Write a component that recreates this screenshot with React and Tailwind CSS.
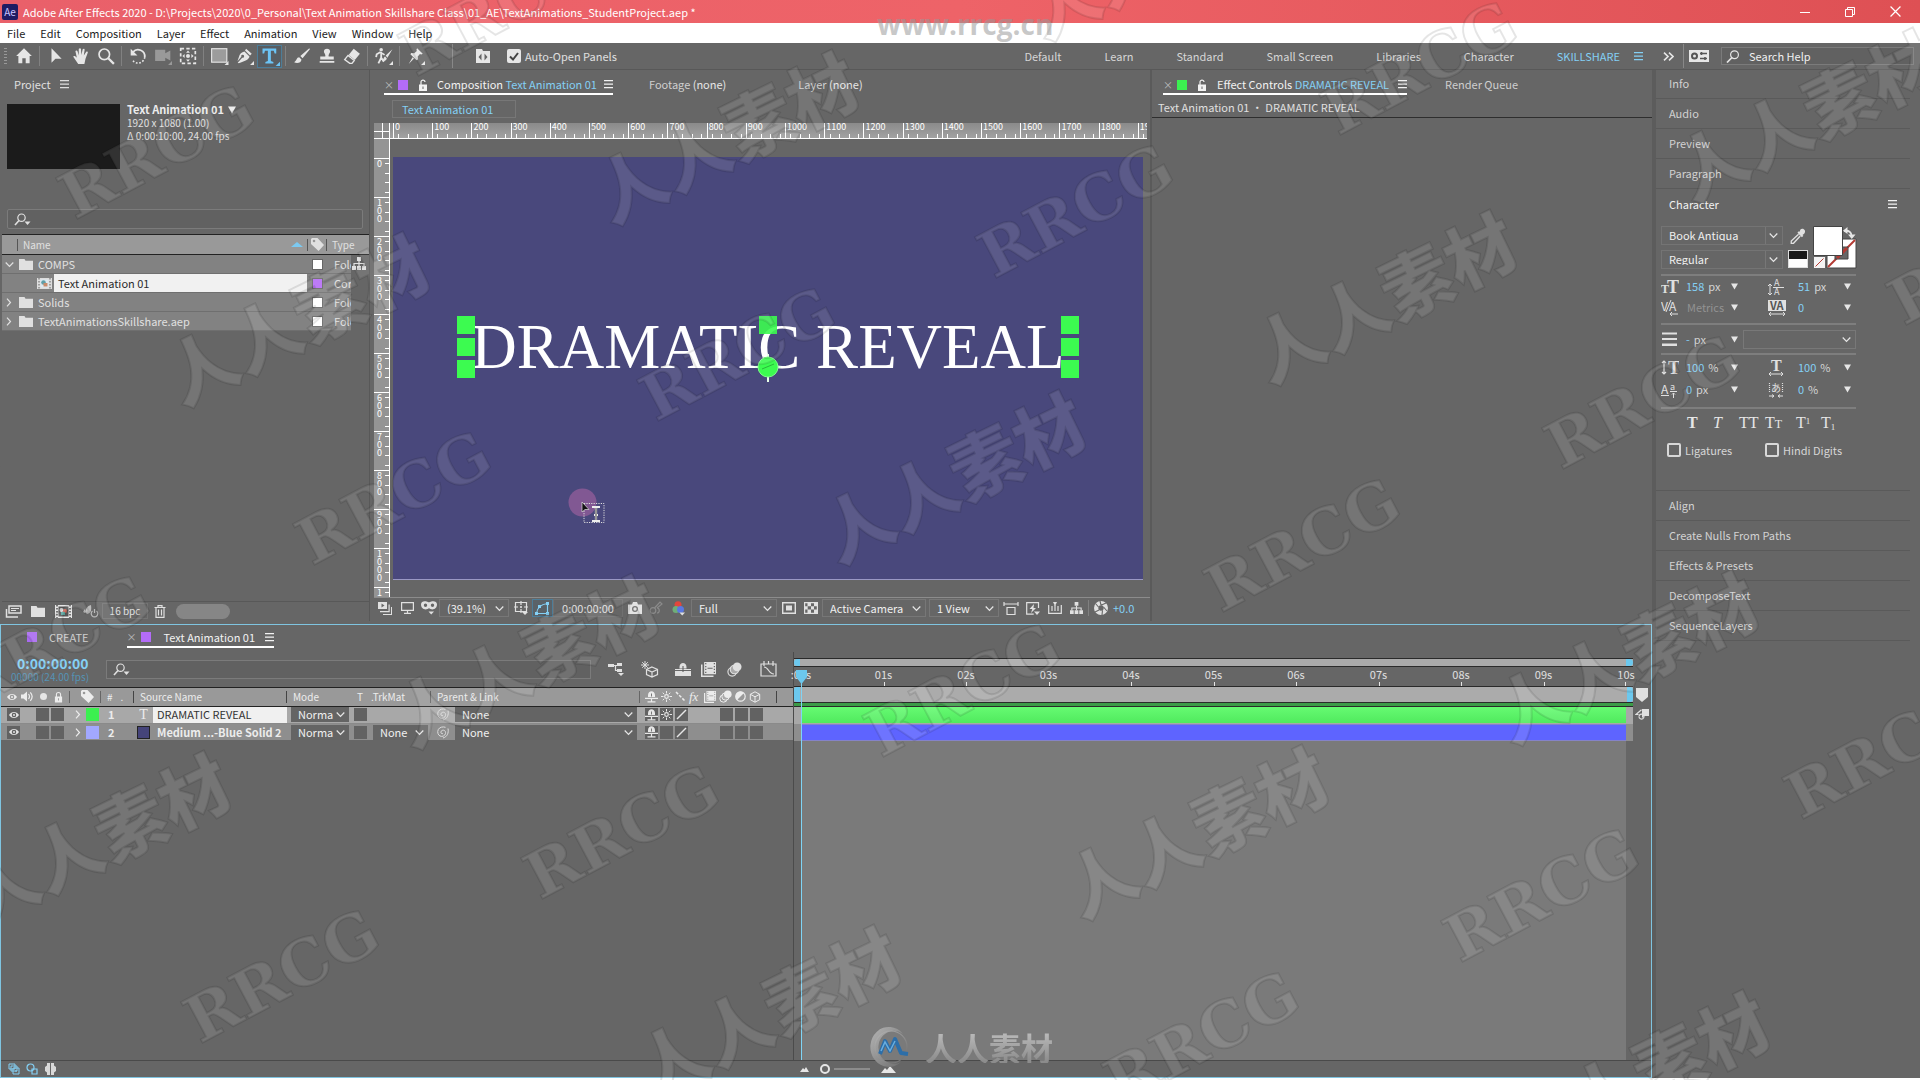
import React from "react";

const FONT = "font-['Noto_Sans_CJK_SC','Noto_Sans',sans-serif]";

function Ic({ w = 16, h = 16, vb = "0 0 16 16", className = "", children }) {
  return (
    <svg width={w} height={h} viewBox={vb} className={`shrink-0 ${className}`} fill="currentColor" aria-hidden="true">
      {children}
    </svg>
  );
}
const line = { fill: "none", stroke: "currentColor", strokeWidth: 1.2 };

const Corner = () => <path d="M16 12.5V16h-3.500z" />;
const Home = () => <Ic w={18} h={18}><path d="M8 1 1 8h2v6.500h3.500V10h3v4.500H13V8h2z" /></Ic>;
const Arrow = () => <Ic w={18} h={18}><path d="M4 1v13l3.500-3.500H13z" /></Ic>;
const Hand = () => (
  <Ic w={18} h={18}>
    <path d="M5.500 15C4 13 2.500 10.500 1 8.500c.8-1 2-.6 3.300 1L3 3.500c.9-.9 1.700-.4 2 .6L6 7.500 6 1.800c.6-1.100 1.700-1 2 0L8.300 7l1.200-5c.8-.9 1.800-.5 1.700.6L10.500 7.500l2.200-3.300c.9-.5 1.600.1 1.300 1L12 10.500 11 15z" />
  </Ic>
);
const Lens = ({ s = 18 }) => <Ic w={s} h={s}><g {...line} strokeWidth="1.500"><circle cx="6.500" cy="6.500" r="4.700" /><path d="m10 10 5 5" strokeWidth="2" /></g></Ic>;
const Rotate = () => (
  <Ic w={18} h={18}>
    <path d="M3.500 4.500A6 6 0 0 1 14 9" {...line} strokeWidth="1.600" />
    <path d="M14 9A6 6 0 0 1 3 11.500" {...line} strokeWidth="1.400" strokeDasharray="1.500 1.500" />
    <path d="M1.500 1.500v6h6z" />
  </Ic>
);
const CamTool = () => <Ic w={20} h={18} className="text-[#999]"><path d="M1 2.500h9v3l4.500-2.500v9L10 9.500v3H1z" /><Corner /></Ic>;
const PanBehind = () => (
  <Ic w={18} h={18}>
    <rect x="1.500" y="1.500" width="13" height="13" {...line} strokeDasharray="3 2" strokeWidth="1.500" />
    <path d="M8 3 6.300 5h3.400zM8 13l1.700-2H6.300zM3 8l2-1.700v3.400zM13 8l-2 1.700V6.300z" /><circle cx="8" cy="8" r="1.800" />
  </Ic>
);
const RectTool = () => <Ic w={19} h={18}><rect x="1" y="1.500" width="13.500" height="12" fill="#9c9c9c" stroke="#e6e6e6" /><Corner /></Ic>;
const Pen = () => (
  <Ic w={18} h={18}>
    <path d="M9 1.500 14 6l-1.500 1.500L8 3zM7.500 4 12 8.500C11.500 11 9 12 6 13l-3.500 1.500L1.500 14l4-4.500a1.300 1.300 0 1 0-.8-.8l-3.400 4L2.500 9c.7-3 2.500-4.500 5-5z" /><Corner />
  </Ic>
);
const TypeTool = () => <Ic w={20} h={20} className="text-[#6cc4f5]"><path d="M2 2h11v4h-1.300L11 3.700H8.700V12l2 .7V14H4.300v-1.300l2-.7V3.700H4L3.300 6H2z" /><Corner /></Ic>;
const Brush = () => <Ic w={18} h={18}><path d="M14.500 1 6.500 8l2 2L15 2zM5.500 9C3 9 3.500 12 1 13.500c2.500 1.500 6.500.5 6.500-2.500z" /></Ic>;
const Stamp = () => <Ic w={18} h={18}><path d="M6.500 8.500C7 6 5 5.500 5.300 3.500c.4-2.700 5-2.700 5.400 0C11 5.500 9 6 9.500 8.500H14V11H2V8.500zM1.500 12.500h13V14h-13z" /></Ic>;
const Eraser = () => <Ic w={18} h={18}><path d="M9.500 1.500 15 6l-4.500 5.500L5 7z" /><path d="M4.500 7.500 1.500 11.200 6 14.500h2l2-2.500z" {...line} /></Ic>;
const Roto = () => (
  <Ic w={20} h={18}>
    <circle cx="5.500" cy="2.500" r="1.600" /><path d="m5 4.500-3.500 2L1 9M5.500 4.500v5L3 14.500M5.500 9.500 8 13M5.500 5l3 2" {...line} strokeWidth="1.600" />
    <path d="M15.500 2 9.500 7.500l1.500 2zM9 8.500c-1.500.5-1 2.500-3 4 2 .6 4-.500 4.500-2.300z" /><Corner />
  </Ic>
);
const PinTool = () => <Ic w={18} h={18}><path d="m9 1 5 5-1.300.6-1.200-.4L9.500 8.500l.2 2.500-1.200.8L3 6.500l.8-1.200 2.700.3L8.700 3.500 8.400 2.300zM5 9l1.200 1.200L1.500 15z" /><Corner /></Ic>;
const Snap = () => (
  <Ic w={16} h={16}><path d="M1 1h6l1 2h7v12H1z" /><path d="M6.500 5.500 3.500 9l3 3.500zM9.500 5.500l3 3.500-3 3.500z" fill="#666" /></Ic>
);
const MenuIc = ({ className = "" }) => <Ic w={9} h={9} vb="0 0 9 9" className={className}><path d="M0 0h9v1.200H0zM0 3.500h9v1.200H0zM0 7h9v1.200H0z" /></Ic>;
const Chev = ({ className = "" }) => <Ic w={9} h={9} vb="0 0 9 9" className={className}><path d="m.7 2.500 3.800 4 3.800-4" {...line} /></Ic>;
const ChevR = () => <Ic w={8} h={9} vb="0 0 8 9"><path d="m2 .7 3.500 3.800L2 8.300" {...line} /></Ic>;
const Lock = ({ w = 10, open = true }) => (
  <Ic w={w} h={12} vb="0 0 10 12"><path d={open ? "M3 6V3c0-2.500 4-2.500 4 0" : "M2.700 6V3.200c0-3 4.600-3 4.600 0V6"} {...line} /><path d="M1 5.500h8V12H1zM4.500 7.500v2.500h1V7.500z" fillRule="evenodd" /></Ic>
);
const SearchIc = () => <Ic w={17} h={13} vb="0 0 17 13"><circle cx="7.500" cy="4.700" r="3.700" {...line} /><path d="M5 7.500 1 12" {...line} strokeWidth="1.600" /><path d="M10.500 8.500h6L13.500 12z" /></Ic>;
const Folder = () => <Ic w={14} h={11} vb="0 0 14 11"><path d="M0 0h5.500l1 1.800H14V11H0z" /></Ic>;
const TagIc = ({ s = 13 }) => <Ic w={s} h={s} vb="0 0 12 12"><path d="M1 0h5l6 6.500L7 12 0 5.500V1zM2.800 1.500a1.200 1.200 0 1 0 0 2.400 1.200 1.200 0 0 0 0-2.400z" fillRule="evenodd" /></Ic>;
const Tree = ({ s = 14, className = "" }) => <Ic w={s} h={s} vb="0 0 14 14" className={className}><path d="M5 0h4v4H5zM0 9h4v4H0zM5 9h4v4H5zM10 9h4v4h-4z" /><path d="M7 4v5M2 9V6.500h10V9" {...line} /></Ic>;
const CompIc = () => <Ic w={15} h={11} vb="0 0 15 11"><path fill="#ddd" d="M0 0h15v11H0z" /><path d="M2 0v11M13 0v11" stroke="#777" strokeDasharray="1.500 1.500" strokeWidth="1.200" /><path fill="#dfeaf2" d="M3.500 1.500h8v8h-8z" /><circle cx="6.500" cy="4.500" r="2.300" fill="#5f9ea8" /><path d="M6.500 5h4v3.500h-4z" fill="#c98b6b" /></Ic>;
const Eye = () => <Ic w={10} h={8} vb="0 0 10 8"><path d="M0 4C2.500 0 7.500 0 10 4 7.500 8 2.500 8 0 4zm5-2.300a2.300 2.300 0 1 0 0 4.600 2.300 2.300 0 0 0 0-4.600z" fillRule="evenodd" /><circle cx="5" cy="4" r="1" /></Ic>;
const Speaker = () => <Ic w={12} h={11} vb="0 0 12 11"><path d="M0 3.500h2.500L6 .5v10L2.500 7.500H0z" /><path d="M7.500 3c1.200 1.500 1.200 3.500 0 5M9.300 1.300c2.200 2.500 2.200 6 0 8.500" {...line} /></Ic>;
const Shy = () => <Ic w={13} h={12} vb="0 0 13 12"><path d="M3 6V4.200c0-5.200 7-5.200 7 0V6zM0 6.800h13V8H0zM2.500 10.300h8v1.200h-8z" /><path d="M6.500 7.500V11" {...line} /><path d="M6.500 2.500v3" stroke="#777" /></Ic>;
const Sun = () => <Ic w={11} h={11} vb="0 0 11 11"><circle cx="5.500" cy="5.500" r="1.800" {...line} /><path d="M5.500 0v2.500M5.500 8.500V11M0 5.500h2.500M8.500 5.500H11M1.700 1.700l1.500 1.500M7.800 7.800l1.500 1.500M9.300 1.700 7.800 3.200M3.200 7.800 1.700 9.300" {...line} strokeWidth="1" /></Ic>;
const Slash = ({ back }) => <Ic w={11} h={11} vb="0 0 11 11"><path d={back ? "M1 1l9 9" : "M1 10 10 1"} {...line} strokeWidth="1.500" strokeDasharray={back ? "3 1.500" : undefined} /></Ic>;
const Film = ({ s = 12 }) => <Ic w={s} h={s} vb="0 0 12 12"><path d="M0 2v10h10v-1.200H1.200V2zM2.500 0H12v9.800H2.500zM3.300.8v1h1v-1zm0 2.300v1h1v-1zm0 2.300v1h1v-1zm0 2.300v1h1v-1zM10.200.8v1h1v-1zm0 2.300v1h1v-1zm0 2.300v1h1v-1zm0 2.300v1h1v-1zM5.200 4.500v.8H9.300v-.8z" fillRule="evenodd" /></Ic>;
const Blur = ({ s = 13 }) => <Ic w={s} h={s} vb="0 0 13 13"><circle cx="4.500" cy="8.500" r="3.700" {...line} strokeWidth="1" /><circle cx="6.500" cy="6.500" r="3.700" fill="#aaa" stroke="currentColor" /><circle cx="8.800" cy="4.200" r="3.800" /></Ic>;
const Half = () => <Ic w={11} h={11} vb="0 0 11 11"><circle cx="5.500" cy="5.500" r="4.700" {...line} /><path d="M9 2A4.700 4.700 0 0 0 2 9z" /></Ic>;
const Cube = ({ s = 12 }) => <Ic w={s} h={s} vb="0 0 12 12"><path d="m6 .8 4.700 2.500v5.400L6 11.200 1.300 8.700V3.300zM1.300 3.300 6 5.800l4.700-2.500M6 5.800v5.400" {...line} strokeWidth="1" /></Ic>;
const Spiral = () => <Ic w={13} h={13} vb="0 0 13 13" className="text-[#ddd]"><path d="M7 7.500C5 8.500 4 5.500 6 4.500s4 .5 3.500 3S6 11 4 10 1 6 2.300 3.500 7 .5 9.500 1.300M12 2.500C13 7 11 11 7 12" {...line} strokeWidth="1" /></Ic>;
const Tri = ({ className = "" }) => <Ic w={7} h={7} vb="0 0 7 7" className={className}><path d="M0 .5h7l-3.500 6z" /></Ic>;

function Sel({ label, value, className = "" }) {
  return (
    <span className={`relative flex items-center ${className}`}>
      <select aria-label={label} defaultValue={value} className="h-full w-full appearance-none bg-transparent pl-[7px] text-[11px] leading-none text-[#f0f0f0] outline-none">
        <option>{value}</option>
      </select>
      <Chev className="pointer-events-none absolute right-1 text-[#e6e6e6]" />
    </span>
  );
}

function Btn({ label, className = "", children }) {
  return <button type="button" aria-label={label} className={`flex shrink-0 items-center justify-center ${className}`}>{children}</button>;
}

const Sep = () => <span className="flex w-[7px] justify-center"><span className="h-5 w-px bg-[#818181]" /></span>;
const Tool = ({ label, active, children }) => (
  <Btn label={label} className={active ? "h-[23px] w-[25px] border border-[#4d7d98] bg-[#575d62]" : "h-[23px] w-[25px]"}>{children}</Btn>
);

function TitleBar() {
  return (
    <header className="flex h-[23px] items-center bg-gradient-to-r from-[#e9606a] via-[#ee6368] to-[#de5054] pl-[2px] text-white">
      <span className="flex h-4 w-4 items-center justify-center rounded-[2px] bg-[#1e1c63] text-[10px] leading-none text-[#c9c6ff]">Ae</span>
      <h1 className="ml-[5px] whitespace-pre text-[11px] leading-[14px]">Adobe After Effects 2020 - D:\Projects\2020\0_Personal\Text Animation Skillshare Class\01_AE\TextAnimations_StudentProject.aep *</h1>
      <div className="ml-auto flex items-center pr-[2px]">
        <Btn label="Minimize" className="w-[45px]"><Ic w={10} h={10} vb="0 0 10 10"><path d="M0 5h10v1H0z" /></Ic></Btn>
        <Btn label="Restore" className="w-[45px]"><Ic w={10} h={10} vb="0 0 10 10"><path d="M.5 2.500h7v7h-7zM2.500 2.500v-2h7v7h-2" {...line} strokeWidth="1" /></Ic></Btn>
        <Btn label="Close" className="w-[46px]"><Ic w={11} h={11} vb="0 0 10 10"><path d="m.5.5 9 9M9.500.5l-9 9" {...line} strokeWidth="1.100" /></Ic></Btn>
      </div>
    </header>
  );
}

function MenuBar() {
  return (
    <nav className="flex h-5 items-center gap-[15px] bg-white pl-[7px] text-[11px] leading-none text-[#222]">
      {["File", "Edit", "Composition", "Layer", "Effect", "Animation", "View", "Window", "Help"].map((m) => (
        <button type="button" key={m}>{m}</button>
      ))}
    </nav>
  );
}

function Toolbar() {
  return (
    <div className="flex h-[27px] items-center border-b border-[#585858] text-[#e6e6e6]">
      <span className="ml-1 mr-[4px] h-4 w-[3px] bg-[repeating-linear-gradient(#999_0_1px,transparent_1px_3px)]" />
      <Tool label="Home"><Home /></Tool><Sep />
      <Tool label="Selection"><Arrow /></Tool><Tool label="Hand"><Hand /></Tool><Tool label="Zoom"><Lens /></Tool><Sep />
      <Tool label="Rotation"><Rotate /></Tool><Tool label="Camera"><CamTool /></Tool><Tool label="Pan Behind"><PanBehind /></Tool><Sep />
      <Tool label="Rectangle"><RectTool /></Tool><Tool label="Pen"><Pen /></Tool><Tool label="Type" active><TypeTool /></Tool><Sep />
      <Tool label="Brush"><Brush /></Tool><Tool label="Clone Stamp"><Stamp /></Tool><Tool label="Eraser"><Eraser /></Tool><Sep />
      <Tool label="Roto Brush"><Roto /></Tool><Sep />
      <Tool label="Puppet Pin"><PinTool /></Tool>
      <span className="ml-6 h-6 w-px bg-[#888]" />
      <Btn label="Panels" className="ml-[22px]"><Snap /></Btn>
      <label className="ml-4 flex items-center gap-[4px] text-[11px] leading-none text-[#e0e0e0]">
        <span className="relative flex h-[14px] w-[14px]">
          <input type="checkbox" defaultChecked className="h-[14px] w-[14px] appearance-none rounded-[2px] bg-[#e6e6e6]" />
          <Ic w={14} h={14} vb="0 0 14 14" className="pointer-events-none absolute left-0 top-0 text-[#444]"><path d="m3 7.500 3 3L11 4" {...line} strokeWidth="2" /></Ic>
        </span>
        Auto-Open Panels
      </label>
      <nav className="ml-auto flex items-center gap-[43px] text-[11px] leading-none text-[#d6d6d6]">
        {["Default", "Learn", "Standard", "Small Screen", "Libraries", "Character"].map((w) => <button type="button" key={w}>{w}</button>)}
        <button type="button" className="flex items-center gap-[14px] text-[#84d0f5]">SKILLSHARE <MenuIc /></button>
      </nav>
      <Btn label="More workspaces" className="ml-5"><Ic w={11} h={9} vb="0 0 11 9"><path d="m1 .7 4 3.800-4 3.800M6 .7l4 3.800-4 3.800" {...line} strokeWidth="1.600" /></Ic></Btn>
      <span className="ml-[9px] h-6 w-px bg-[#888]" />
      <Btn label="Sync settings" className="ml-[5px]">
        <Ic w={20} h={12} vb="0 0 20 12"><path d="M0 0h20v12H0z" /><circle cx="5.500" cy="6" r="2.500" fill="none" stroke="#555" strokeWidth="2" /><path d="M11 3.500h7M11 8.500h7" stroke="#555" strokeWidth="1.300" /><path d="M12.500 2v3M16 7v3" stroke="#555" strokeWidth="1.600" /></Ic>
      </Btn>
      <label className="ml-3 mr-[6px] flex h-[18px] w-[193px] items-center gap-[9px] border border-[#7b7b7b] bg-[#616161] pl-[4px]">
        <Ic w={14} h={13} vb="0 0 14 13"><circle cx="8.500" cy="4.700" r="3.900" {...line} /><path d="M6 7.500 1 12.500" {...line} strokeWidth="1.700" /></Ic>
        <input aria-label="Search Help" placeholder="Search Help" className="w-full bg-transparent text-[11px] leading-none outline-none placeholder:text-[#f0f0f0]" />
      </label>
    </div>
  );
}

const Tab = ({ active, children, className = "" }) => (
  <div className={`flex h-[19px] items-center text-[11px] leading-none ${active ? "border-b-2 border-white text-[#f2f2f2]" : "border-b-2 border-transparent text-[#cfcfcf]"} ${className}`}>{children}</div>
);

const PROJECT_ROWS = [
  { name: "COMPS", kind: "Folder", open: true },
  { name: "Text Animation 01", kind: "Composition", child: true },
  { name: "Solids", kind: "Folder" },
  { name: "TextAnimationsSkillshare.aep", kind: "Folder" },
];

function ProjectPanel() {
  return (
    <section className="flex w-[370px] shrink-0 flex-col border-r border-[#585858] pl-[2px] text-[#e0e0e0]">
      <div className="flex h-7 items-center gap-[9px] pl-3 text-[11px] leading-none">Project <MenuIc className="text-[#ddd]" /></div>
      <div className="flex gap-[7px] pl-[5px] pt-[6px]">
        <div className="h-[65px] w-[113px] bg-[#1b1b1b]" />
        <div className="-mt-[1px] text-[10px] leading-[13px]">
          <p className="flex items-center gap-1 text-[11px] font-bold leading-[13px] text-[#ececec]">Text Animation 01 <Tri className="h-2 w-2" /></p>
          <p>1920 x 1080 (1.00)</p>
          <p>Δ 0:00:10:00, 24.00 fps</p>
        </div>
      </div>
      <label className="ml-[5px] mr-[6px] mt-10 flex h-5 items-center gap-2 rounded-[2px] border border-[#7b7b7b] bg-[#616161] pl-[6px]">
        <SearchIc /><input aria-label="Search project" className="w-full bg-transparent text-[11px] outline-none" />
      </label>
      <table className="mt-[5px] w-full table-fixed border-collapse text-left text-[11px] leading-none">
        <thead>
          <tr className="h-5 border-y border-[#222] bg-[#999]">
            <th className="w-[305px] pl-[15px] font-normal"><span className="flex h-3 items-center justify-between border-l border-[#555] pl-[5px] pr-1 text-[10px]">Name <Ic w={12} h={5} vb="0 0 12 5" className="text-[#7cc9f0]"><path d="M0 5h12L6 0z" /></Ic></span></th>
            <th aria-label="Label" className="w-[20px]"><span className="flex h-3 items-center justify-center border-x border-[#555]"><TagIc /></span></th>
            <th className="w-[24px] pl-[5px] text-[10px] font-normal">Type</th>
            <th aria-label="More" />
          </tr>
        </thead>
        <tbody>
          {PROJECT_ROWS.map((r) => (
            <tr key={r.name} className="h-[19px]">
              <td className="border-b border-[#6f6f6f] bg-[#828282] p-0">
                {r.child ? (
                  <div className="flex items-center pl-[35px]"><CompIc /><span className="ml-[2px] flex h-[18px] flex-1 items-center bg-[#f1f1f1] pl-1 text-[#2b2b2b]">{r.name}</span></div>
                ) : (
                  <div className="flex h-[18px] items-center pl-[3px]">
                    <span className="w-[14px]">{r.open ? <Chev /> : <ChevR />}</span><Folder /><span className="ml-[5px]">{r.name}</span>
                  </div>
                )}
              </td>
              <td className="border-b border-[#6f6f6f] bg-[#828282] p-0"><span className={`mx-auto block h-[11px] w-[11px] border border-[#666] ${r.child ? "bg-[#b56cf5]" : "bg-white"}`} /></td>
              <td className="overflow-hidden whitespace-nowrap border-b border-[#6f6f6f] bg-[#828282] p-0 pl-[7px]">{r.kind}</td>
              <td className="p-0">{r.open && <Tree className="ml-[1px]" />}</td>
            </tr>
          ))}
        </tbody>
      </table>
      <div className="mt-auto flex h-[20px] items-center border-t border-[#585858]">
        <Btn label="Interpret footage" className="ml-[2px] w-[18px]"><Ic w={17} h={13} vb="0 0 17 13"><path d="M4 1h12v7H4zM1.500 4v8H13M1.500 12h9" {...line} strokeWidth="1.500" /><path d="M6 3h8v1H6zM6 5h5v1H6z" /></Ic></Btn>
        <Btn label="New folder" className="ml-[9px]"><Folder /></Btn>
        <Btn label="New composition" className="ml-[10px]"><Ic w={17} h={13} vb="0 0 17 13"><path fill="#e6e6e6" d="M0 0h17v13H0z" /><path d="M2 0v13M15 0v13" stroke="#555" strokeDasharray="1.500 1.500" strokeWidth="1.500" /><path fill="#555" d="M3.500 1.500h10v10h-10z" /><circle cx="6.500" cy="5" r="2" fill="#e0e0e0" /><circle cx="10" cy="6" r="2" fill="#d06a5a" /><path fill="#5aa6a0" d="M6 7h4v3H6z" /></Ic></Btn>
        <Btn label="Project settings" className="ml-[10px] text-[#bbb]"><Ic w={17} h={14} vb="0 0 17 14"><path d="M9 1C5 2 4 5 3 8l2 2c3-1 5-2 4-9zM1 8l2-3v4z" /><path d="M10.500 7a3.300 3.300 0 1 0 4 0M12.500 5v4" {...line} /></Ic></Btn>
        <button type="button" className="ml-[3px] h-4 w-[46px] border border-[#747474] text-[10px] leading-none">16 bpc</button>
        <Btn label="Delete" className="ml-[6px]"><Ic w={12} h={13} vb="0 0 12 13"><path d="M.5 2.500h11M4 2V.7h4V2M2 3v9.300h8V3M4.500 4.500v6M7.500 4.500v6" {...line} /></Ic></Btn>
        <span className="ml-[10px] h-[15px] w-[54px] rounded-full bg-[#868686]" />
      </div>
    </section>
  );
}

const RULER_X = Array.from({ length: 20 }, (_, i) => i * 100);
const RULER_Y = Array.from({ length: 12 }, (_, i) => i * 100);

const Handle = ({ className }) => <span className={`absolute h-[18px] w-[18px] bg-[#3cfb50] ${className}`} />;

function CompositionPanel() {
  return (
    <section className="flex min-w-0 flex-[779_1_0%] flex-col border-r-2 border-[#5a5a5a] pl-1 text-[#e0e0e0]">
      <div className="flex pl-[10px] pt-[6px]">
        <Tab active>
          <span className="w-[14px] text-[10px] text-[#bbb]">×</span><span className="h-[10px] w-[10px] bg-[#b46cf8]" />
          <span className="ml-[10px]"><Lock /></span>
          <span className="ml-[9px] whitespace-pre">Composition <span className="text-[#84d0f5]">Text Animation 01</span></span>
          <MenuIc className="ml-[7px]" />
        </Tab>
        <Tab className="ml-9 whitespace-pre">Footage <span className="text-[#e6e6e6]">(none)</span></Tab>
        <Tab className="ml-[72px] whitespace-pre">Layer <span className="text-[#e6e6e6]">(none)</span></Tab>
      </div>
      <button type="button" className="ml-[18px] mt-[5px] h-[18px] w-[124px] border border-[#777] pl-[9px] text-left text-[11px] leading-none text-[#84d0f5]">Text Animation 01</button>
      <div className="mt-[5px] grid grid-cols-[16px_minmax(0,1fr)] pr-[3px]">
        <div className="h-4 border-b border-r border-white bg-[#8c8c8c] bg-[linear-gradient(white,white),linear-gradient(white,white)] bg-[length:1px_100%,100%_1px] bg-[position:8px_0,0_8px] bg-no-repeat" />
        <div className="flex h-4 overflow-hidden border-b border-white bg-[linear-gradient(#8a8a8a,#a2a2a2)] pl-[3px]">
          {RULER_X.map((v) => (
            <div key={v} className="flex w-[5.200%] shrink-0 flex-col justify-between border-l border-white">
              <span className="h-[9px] pl-px text-[9px] leading-[8px] text-white">{v}</span>
              <span className="flex h-1 justify-around">{[1, 2, 3, 4].map((t) => <i key={t} className="w-px bg-white" />)}</span>
            </div>
          ))}
        </div>
        <div className="relative border-r border-white bg-[#949494]">
          <div className="absolute inset-0 overflow-hidden pt-[19px]">
            {RULER_Y.map((v) => (
              <div key={v} className="flex h-[39px] justify-between border-t border-white pl-[3px]">
                <span className="w-[6px] break-all pt-px text-[9px] leading-[8px] text-white">{v}</span>
                <span className="flex w-1 flex-col justify-around">{[1, 2, 3, 4].map((t) => <i key={t} className="h-px bg-white" />)}</span>
              </div>
            ))}
          </div>
        </div>
        <div className="pb-[17px] pl-[3px] pr-1 pt-[18px]">
          <div className="relative flex aspect-[750/423] items-center justify-center border-b border-[#9a98c4] bg-[#49487c] pb-[41px]">
            <div className="relative whitespace-nowrap px-[10px] font-['Liberation_Serif',serif] text-[63px] leading-[62px] text-white">
              DRAMATIC REVEAL
              <Handle className="left-[-4px] top-0" /><Handle className="left-[-4px] top-[22px]" /><Handle className="left-[-4px] top-[44px]" />
              <Handle className="left-[calc(50%-9px)] top-0 opacity-90" />
              <Handle className="right-[-4px] top-0" /><Handle className="right-[-4px] top-[22px]" /><Handle className="right-[-4px] top-[44px]" />
              <svg className="absolute left-[calc(50%-13px)] top-[38px]" width="26" height="28" viewBox="0 0 26 28" aria-hidden="true">
                <path d="M13 0v28M0 13h26" stroke="#e8ffe8" strokeWidth="2" /><circle cx="13" cy="13" r="10" fill="#3cfb50" stroke="#7dfc8a" /><path d="M7 15 19 10" stroke="#2bb53c" />
              </svg>
            </div>
            <svg className="absolute left-[23.400%] top-[78.500%]" width="40" height="38" viewBox="0 0 40 38" aria-hidden="true">
              <ellipse cx="14.500" cy="14.500" rx="14" ry="14" fill="#9a5f9c" opacity=".7" />
              <rect x="16" y="15.500" width="20" height="19" fill="none" stroke="#ddd" strokeDasharray="1.200 1.200" />
              <path d="M14 14v10l3-2.500h4z" fill="#111" stroke="#ddd" strokeWidth=".7" />
              <path d="M24 19h3l1 1 1-1h3M28 20v12M24 33h3l1-1 1 1h3M26 27h4" fill="none" stroke="#eee" strokeWidth="2.200" /><path d="M28 20v12" stroke="#111" strokeWidth=".8" />
            </svg>
          </div>
        </div>
      </div>
      <div className="flex h-6 items-center overflow-hidden border-t border-[#8c8c8c] pb-[2px]">
        <Btn label="Always preview" className="ml-[2px] w-[18px]"><Ic w={14} h={13} vb="0 0 14 13"><path d="M0 0h9v7H0zM3.500 1.500v4l3-2zM10.500 2.500V9H2v1.200h9.700V2.500zM13 5v7H5v1h9V5z" fillRule="evenodd" /></Ic></Btn>
        <Btn label="Primary viewer" className="ml-[4px] w-[18px]"><Ic w={13} h={12} vb="0 0 13 12"><path d="M.6.6h11.800v7.800H.6zM6.500 8.400V11M3 11.300h7" {...line} /></Ic></Btn>
        <Btn label="Mask visibility" className="ml-[3px] w-[20px]"><Ic w={16} h={14} vb="0 0 16 14"><path d="M0 3.500C0-1 6 0 8 1.500 10 0 16-1 16 3.500S11 10 8 7C5 10 0 8 0 3.500zm4.500-1a1.700 1.700 0 1 0 0 3.400 1.700 1.700 0 0 0 0-3.400zm7 0a1.700 1.700 0 1 0 0 3.400 1.700 1.700 0 0 0 0-3.400z" fillRule="evenodd" /><path d="M7.500 10.500H13L10.200 13.500z" /></Ic></Btn>
        <Sel label="Magnification" value="(39.1%)" className="h-[18px] w-[70px] border border-[#777]" />
        <Btn label="Grid" className="ml-[3px] w-[18px]"><Ic w={15} h={14} vb="0 0 15 14"><path d="M1.500 1.500h11v9h-11zM7 0v4M7 8v4M0 6h4M10 6h4M6 6h2M7 5v2" {...line} /><path d="M8 11h6l-3 3z" /></Ic></Btn>
        <Btn label="Mask shapes" className="ml-[2px] h-[18px] w-[21px] border border-[#4d7d98] bg-[#5a6268] text-[#84d0f5]"><Ic w={15} h={13} vb="0 0 15 13"><path d="M1.500 11.500C2 6 5 2.500 12.500 1.500v10z" {...line} /><path d="M0 10h3v3H0zM11 0h3v3h-3zM11 10h3v3h-3zM3 3h3v3H3z" /></Ic></Btn>
        <button type="button" className="h-[18px] w-[70px] border border-[#707070] text-[11px] leading-none">0:00:00:00</button>
        <Btn label="Snapshot" className="ml-[3px] w-[18px]"><Ic w={14} h={12} vb="0 0 14 12"><path d="M0 2.500h4L5 0h4l1 2.500h4V12H0zM7 4a3 3 0 1 0 0 6 3 3 0 0 0 0-6zm0 1.300a1.700 1.700 0 1 1 0 3.400 1.700 1.700 0 0 1 0-3.400z" fillRule="evenodd" /></Ic></Btn>
        <Btn label="Show snapshot" className="ml-[3px] w-[18px] text-[#8b8b8b]"><Ic w={14} h={14} vb="0 0 14 14"><circle cx="4" cy="9.500" r="2.800" {...line} /><path d="M5.500 7 11 1l2 2-5 4M8 7c3 0 3 5 0 5" {...line} /></Ic></Btn>
        <Btn label="Channels" className="ml-[5px] w-[18px]"><Ic w={14} h={15} vb="0 0 14 15"><circle cx="6" cy="3.700" r="3.500" fill="#e2463c" /><circle cx="4" cy="8.500" r="3.500" fill="#6fae78" /><circle cx="8.500" cy="8.500" r="3.500" fill="#5a78e0" /><path d="M7.500 11.500H13L10.200 14.500z" /></Ic></Btn>
        <Sel label="Resolution" value="Full" className="ml-[3px] h-[18px] w-[86px] border border-[#777]" />
        <Btn label="Region of interest" className="ml-[3px] w-[18px]"><Ic w={14} h={12} vb="0 0 14 12"><path d="M.7.7h12.600v10.600H.7z" {...line} strokeWidth="1.400" /><path d="M4 3.500h6v5H4z" /></Ic></Btn>
        <Btn label="Transparency grid" className="ml-[4px] w-[18px]"><Ic w={14} h={12} vb="0 0 14 12"><path d="M.6.6h12.800v10.800H.6z" {...line} /><path d="M3.500 1h3.500v3.300H3.500zM10 1h3.500v3.300H10zM1 4.300h2.700v3.300H1zM7 4.300h3v3.300H7zM3.500 7.600H7V11H3.500zM10 7.600h3.500V11H10z" /></Ic></Btn>
        <Sel label="3D view" value="Active Camera" className="ml-[2px] h-[18px] w-[104px] border border-[#777]" />
        <Sel label="View layout" value="1 View" className="ml-[3px] h-[18px] w-[70px] border border-[#777]" />
        <Btn label="Pixel aspect" className="ml-[3px] w-[18px]"><Ic w={16} h={13} vb="0 0 16 13"><path d="M4 5.500h8v7H4zM1 2h14M1 0v4M15 0v4" {...line} /></Ic></Btn>
        <Btn label="Fast previews" className="ml-1 w-[18px]"><Ic w={14} h={13} vb="0 0 14 13"><path d="M12.500 6V.7H.7v11.500h7" {...line} /><path d="M8 2 3.500 7h2.800L5 11l5-5H7.500zM8 9.500h6l-3 3.500z" /></Ic></Btn>
        <Btn label="Timeline" className="ml-1 w-[18px]"><Ic w={14} h={12} vb="0 0 14 12"><path d="M.7 3v8.300h12.600V3M4 4v5M10 4v5M7 3v6" {...line} /><path d="M5 0h4L7 4z" /></Ic></Btn>
        <Btn label="Flowchart" className="ml-[3px] w-[18px]"><Tree s={13} /></Btn>
        <span className="ml-[3px] h-4 w-px bg-[#808080]" />
        <Btn label="Reset exposure" className="ml-[5px] w-[14px]"><Ic w={14} h={14} vb="0 0 14 14"><path d="M7 0a7 7 0 1 0 0 14A7 7 0 0 0 7 0zm0 4.300a2.700 2.700 0 1 1 0 5.400 2.700 2.700 0 0 1 0-5.400z" fillRule="evenodd" /><path d="M7 4.300 12 2M9.500 6 13 10M8.500 9.200 8 14M5 9 1 11M4.500 6 1.500 2.500M7 4 6 0" stroke="#666" strokeWidth="1.100" /></Ic></Btn>
        <span className="ml-[5px] text-[11px] leading-none text-[#84d0f5]">+0.0</span>
      </div>
    </section>
  );
}

function EffectPanel() {
  return (
    <section className="flex min-w-0 flex-[502_1_0%] flex-col text-[#e0e0e0]">
      <div className="flex pl-[11px] pt-[6px]">
        <Tab active>
          <span className="w-[14px] text-[10px] text-[#bbb]">×</span><span className="h-[10px] w-[10px] bg-[#3cf050]" />
          <span className="ml-[10px]"><Lock /></span>
          <span className="ml-[10px] whitespace-pre">Effect Controls <span className="text-[#84d0f5]">DRAMATIC REVEAL</span></span>
          <MenuIc className="ml-[9px]" />
        </Tab>
        <Tab className="ml-[38px]">Render Queue</Tab>
      </div>
      <p className="mt-[2px] flex h-[21px] items-center whitespace-pre border-b border-[#2e2e2e] pl-[6px] text-[11px] leading-none">Text Animation 01 • DRAMATIC REVEAL</p>
    </section>
  );
}

const PanelTitle = ({ children }) => (
  <button type="button" className="flex h-[30px] w-full items-center border-b border-[#5a5a5a] pl-[13px] text-left text-[11px] leading-none text-[#d2d2d2]">{children}</button>
);
const Hr = () => <div className="h-[2px] w-[195px] bg-[#7e7e7e]" />;

function CharField({ icon, value, unit, dim, label, className = "", iconClass = "w-[23px]" }) {
  return (
    <label className={`flex h-[21px] items-center text-[11px] leading-none ${className}`}>
      <span className={`flex justify-start text-[#e0e0e0] ${iconClass}`}>{icon}</span>
      <span className="sr-only">{label}</span>
      <span className={dim ? "pl-[3px] text-[#929292]" : "pl-[2px] text-[#84d0f5]"}>{value}</span>
      <span className="pl-1 text-[#d5d5d5]">{unit}</span>
      <Tri className="ml-auto text-[#e6e6e6]" />
    </label>
  );
}

const Glyph = ({ w = 18, children }) => (
  <Ic w={w} h={16} vb={`0 0 ${w} 16`}>{children}</Ic>
);
const serif = { fontFamily: "Liberation Serif" };

function CharacterPanel() {
  return (
    <aside className="w-[268px] shrink-0 border-l-4 border-[#5c5c5c] pr-[10px] text-[#e0e0e0]">
      <div className="-mt-px">
        {["Info", "Audio", "Preview", "Paragraph"].map((t) => <PanelTitle key={t}>{t}</PanelTitle>)}
      </div>
      <div className="flex h-[30px] items-center justify-between pl-[13px] pr-[13px] text-[11px] leading-none text-[#f2f2f2]">Character <MenuIc /></div>
      <div className="pl-[5px]">
        <div className="mt-[7px] flex items-start">
          <div className="flex flex-col gap-[5px]">
            <Sel label="Font family" value="Book Antiqua" className="h-[19px] w-[122px] border border-[#747474] bg-[linear-gradient(#777,#777)] bg-[length:1px_100%] bg-[position:103px_0] bg-no-repeat" />
            <Sel label="Font style" value="Regular" className="h-[19px] w-[122px] border border-[#747474] bg-[linear-gradient(#777,#777)] bg-[length:1px_100%] bg-[position:103px_0] bg-no-repeat" />
          </div>
          <div className="ml-[5px] flex w-5 flex-col items-center">
            <Btn label="Eyedropper"><Ic w={18} h={20}><path d="M10 2.500c2-2.500 6 .5 3.500 3.500L12 7l.8.8-1.300 1.200L7.500 5l1.200-1.300.800.5z" /><path d="M8.500 6.500 2 12.500v2h2l6-6.500" {...line} /></Ic></Btn>
            <Btn label="Black or white" className="mt-1 h-[18px] w-5 border border-[#ddd] bg-[linear-gradient(#1a1a1a_50%,white_50%)]" />
          </div>
          <svg className="ml-[5px]" width="44" height="43" viewBox="0 0 44 43" aria-hidden="true">
            <path d="M14 13h29v29H14z" fill="#fff" stroke="#444" /><path d="M15 41 42 14" stroke="#b33a33" strokeWidth="2" /><path d="M22 21h13v12H22z" fill="#666" stroke="#444" />
            <path d="M24 32 34 22" stroke="#b33a33" strokeWidth="3" />
            <path d="M.5.5h29v29H.5z" fill="#fff" stroke="#444" /><path d="M1 31h11v11H1z" fill="#f4f4f4" /><path d="M2.500 40.500 10.500 32.500" stroke="#b33a33" />
            <path d="M31 5c5-1 7.500 1.500 7.500 5" fill="none" stroke="#e6e6e6" strokeWidth="1.800" /><path d="M34.500 1v7L30 4.800zM35 8.500h7.500L38.800 13z" fill="#e6e6e6" />
          </svg>
        </div>
        <div className="mt-[5px]"><Hr /></div>
        <div className="flex w-[192px]">
          <CharField className="w-[77px]" label="Font size" value="158" unit="px" icon={<Glyph><text x="0" y="14" fontSize="12" fontWeight="bold" style={serif}>T</text><text x="6" y="14" fontSize="18" fontWeight="bold" style={serif}>T</text></Glyph>} />
          <CharField className="ml-[29px] w-[84px]" iconClass="w-[29px]" label="Leading" value="51" unit="px" icon={<Glyph><text x="7" y="7" fontSize="9">A</text><text x="7" y="16" fontSize="9">A</text><path d="M6 8.500h11M3 5v11M1 7l2-2 2 2M1 14l2 2 2-2" {...line} strokeWidth="1" /></Glyph>} />
        </div>
        <div className="flex w-[192px]">
          <CharField className="w-[77px]" label="Kerning" value="Metrics" unit="" dim icon={<Glyph><text x="0" y="11" fontSize="12">V</text><text x="8" y="11" fontSize="12">A</text><path d="m5 12 5-12M9 14h8M11 12l-2 2 2 2" {...line} strokeWidth="1" /></Glyph>} />
          <CharField className="ml-[29px] w-[84px]" iconClass="w-[29px]" label="Tracking" value="0" unit="" icon={<Glyph w={20}><path d="M1 0h18v11H1z" /><text x="3" y="10" fontSize="11" fontWeight="bold" fill="#555">VA</text><path d="M2 14h16M4 12l-2 2 2 2M16 12l2 2-2 2" {...line} strokeWidth="1" /></Glyph>} />
        </div>
        <div className="mt-[5px]"><Hr /></div>
        <div className="flex h-7 items-center">
          <CharField className="w-[77px]" label="Stroke width" value="-" unit="px" icon={<Glyph><path d="M1 1.500h15v2H1zM1 7h15v2H1zM1 12.500h15v2.500H1z" /></Glyph>} />
          <Sel label="Stroke order" value="" className="ml-[5px] h-[19px] w-[113px] border border-[#787878]" />
        </div>
        <Hr />
        <div className="mt-[2px] flex w-[192px]">
          <CharField className="w-[77px]" label="Vertical scale" value="100" unit="%" icon={<Glyph><text x="7" y="14" fontSize="18" fontWeight="bold" style={serif}>T</text><path d="M3 1v13M1 3l2-2 2 2M1 12l2 2 2-2" {...line} /></Glyph>} />
          <CharField className="ml-[29px] w-[84px]" iconClass="w-[29px]" label="Horizontal scale" value="100" unit="%" icon={<Glyph><text x="4" y="11" fontSize="16" fontWeight="bold" style={serif}>T</text><path d="M2 14h14M4 12l-2 2 2 2M14 12l2 2-2 2" {...line} strokeWidth="1" /></Glyph>} />
        </div>
        <div className="mt-px flex w-[192px]">
          <CharField className="w-[77px]" label="Baseline shift" value="0" unit="px" icon={<Glyph><text x="0" y="12" fontSize="12">A</text><text x="9" y="8" fontSize="9">a</text><path d="M0 13.500h8M9 9.500h7M12.500 16v-5M11 12.500l1.500-1.500 1.500 1.500" {...line} strokeWidth="1" /></Glyph>} />
          <CharField className="ml-[29px] w-[84px]" iconClass="w-[29px]" label="Tsume" value="0" unit="%" icon={<Glyph><text x="4" y="10" fontSize="10" fontFamily="Noto Sans CJK JP">あ</text><path d="M2.500 1v10M15.500 1v10" {...line} strokeDasharray="1 1" /><path d="M2 14h5M5 12.500 7 14l-2 1.500M16 14h-5M13 12.500 11 14l2 1.500" {...line} strokeWidth="1" /></Glyph>} />
        </div>
        <div className="mt-[7px]"><Hr /></div>
        <div className="flex h-7 items-center pl-[26px] font-['Liberation_Serif',serif] text-[16px] leading-none text-[#e6e6e6]">
          <button type="button" className="w-[26px] text-left font-bold">T</button>
          <button type="button" className="w-[26px] text-left italic">T</button>
          <button type="button" className="w-[26px] text-left">TT</button>
          <button type="button" className="w-[31px] text-left">T<span className="text-[12px]">T</span></button>
          <button type="button" className="w-[25px] text-left">T<sup className="text-[9px]">1</sup></button>
          <button type="button" className="text-left">T<sub className="text-[9px]">1</sub></button>
        </div>
        <div className="flex h-[26px] items-center pl-[6px] text-[11px] leading-none text-[#d6d6d6]">
          <label className="flex w-[98px] items-center gap-1"><input type="checkbox" className="h-[14px] w-[14px] appearance-none rounded-[2px] border-2 border-[#d8d8d8]" />Ligatures</label>
          <label className="flex items-center gap-1"><input type="checkbox" className="h-[14px] w-[14px] appearance-none rounded-[2px] border-2 border-[#d8d8d8]" />Hindi Digits</label>
        </div>
      </div>
      <div className="mt-[27px] border-t border-[#5a5a5a]">
        {["Align", "Create Nulls From Paths", "Effects & Presets", "DecomposeText", "SequenceLayers"].map((t) => <PanelTitle key={t}>{t}</PanelTitle>)}
      </div>
    </aside>
  );
}

const LAYERS = [
  { n: 1, name: "DRAMATIC REVEAL", selected: true, color: "bg-[#3cf050]", sun: true },
  { n: 2, name: "Medium ...-Blue Solid 2", color: "bg-[#a2a8ff]", trk: true },
];
const Box = ({ children, className = "" }) => <span className={`flex h-[13px] w-[13px] shrink-0 items-center justify-center bg-[#626262] text-[#e6e6e6] ${className}`}>{children}</span>;

function LayerTable() {
  return (
    <table className="w-full table-fixed border-collapse text-left text-[11px] leading-none text-[#ececec]">
      <colgroup>
        <col className="w-[69px]" /><col className="w-[31px]" /><col className="w-[33px]" /><col className="w-[153px]" /><col className="w-[64px]" />
        <col className="w-[18px]" /><col className="w-[62px]" /><col className="w-[209px]" /><col className="w-[137px]" /><col />
      </colgroup>
      <thead>
        <tr className="h-[19px] border-y border-[#222] bg-[#999] text-[10px] [&_th]:p-0 [&_th]:font-normal">
          <th><span className="flex h-3 items-center gap-1 border-r border-[#666] pl-[6px]"><Eye /><Speaker /><span className="mx-[3px] h-[7px] w-[7px] rounded-full bg-[#e6e6e6]" /><Lock w={9} open={false} /></span></th>
          <th><span className="flex h-3 items-center justify-center border-r border-[#666] pl-1"><TagIc /></span></th>
          <th><span className="flex h-3 items-center gap-2 border-r border-[#444] pl-[6px] leading-none">#<span>.</span></span></th>
          <th><span className="flex h-3 items-center border-r border-[#444] pl-[6px]">Source Name</span></th>
          <th className="!pl-[6px]">Mode</th>
          <th className="!pl-[6px]">T</th>
          <th><span className="flex h-3 items-center border-r border-[#666] pl-[2px]">.TrkMat</span></th>
          <th><span className="flex h-3 items-center border-r border-[#666] pl-[6px]">Parent &amp; Link</span></th>
          <th><span className="flex h-3 items-center gap-[3px] border-r border-[#444] pl-[5px]"><Shy /><Sun /><Slash back /><i className="w-3 font-['Liberation_Serif',serif] text-[13px]">fx</i><Film /><Blur /><Half /><Cube /></span></th>
          <th aria-label="End" />
        </tr>
      </thead>
      <tbody>
        {LAYERS.map((l) => (
          <tr key={l.n} className={`h-[17px] [&_td]:p-0 ${l.selected ? "border-b border-[#8a8a8a] bg-[#a8a8a8]" : "bg-[#8e8e8e]"}`}>
            <td><span className="flex items-center pl-[6px]"><Box><Eye /></Box><Box className="ml-[16px]" /><Box className="ml-[2px]" /></span></td>
            <td><span className="flex items-center pl-[4px]"><ChevR /><span className={`ml-[4px] h-[13px] w-[13px] ${l.color}`} /></span></td>
            <td className="!pl-[7px] font-bold">{l.n}</td>
            <td>
              <span className="flex items-center">
                <span className="flex w-[19px] justify-center">{l.selected ? <span className="font-['Liberation_Serif',serif] text-[14px] leading-none">T</span> : <span className="h-[13px] w-[13px] border border-[#222] bg-[#45447a]" />}</span>
                {l.selected ? <span className="flex h-4 flex-1 items-center whitespace-pre bg-[#f0f0f0] pl-1 text-[#333]">{l.name}</span> : <span className="whitespace-pre pl-1 font-bold">{l.name}</span>}
              </span>
            </td>
            <td><Sel label={`Mode ${l.n}`} value="Norma" className="ml-[4px] h-[15px] w-[58px] bg-[#646464]" /></td>
            <td><Box className="ml-[3px]" /></td>
            <td>{l.trk && <Sel label="Track matte" value="None" className="ml-[4px] h-[15px] w-[55px] bg-[#646464]" />}</td>
            <td><span className="flex items-center pl-[5px]"><Spiral /><Sel label={`Parent ${l.n}`} value="None" className="ml-[6px] h-[15px] w-[182px] bg-[#646464]" /></span></td>
            <td><span className="flex items-center gap-[2px] pl-[5px]"><Box><Shy /></Box><Box>{l.sun && <Sun />}</Box><Box><Slash /></Box><Box className="ml-[30px]" /><Box /><Box /></span></td>
            <td />
          </tr>
        ))}
      </tbody>
    </table>
  );
}

function Timeline() {
  return (
    <section className="flex flex-1 flex-col border border-[#7fc4e0] text-[#e0e0e0]">
      <div className="flex h-[27px] items-start pt-1">
        <Tab className="ml-[26px]"><span className="h-[10px] w-[10px] bg-[#a96af0]" /><span className="ml-[12px]">CREATE</span></Tab>
        <Tab active className="ml-[38px]">
          <span className="w-[14px] text-[10px] text-[#bbb]">×</span><span className="h-[10px] w-[10px] bg-[#b46cf8]" />
          <span className="ml-[13px]">Text Animation 01</span><MenuIc className="ml-[10px]" />
        </Tab>
      </div>
      <div className="flex flex-1">
        <div className="flex w-[793px] shrink-0 flex-col border-r border-[#4b4b4b]">
          <div className="flex h-[35px] items-center">
            <div className="w-[105px] pl-[10px]">
              <p className="pl-[6px] text-[14px] font-bold leading-[16px] text-[#84d0f5]">0:00:00:00</p>
              <p className="whitespace-pre text-[10px] leading-[12px] text-[#5593b5]">00000 (24.00 fps)</p>
            </div>
            <label className="flex h-[19px] w-[485px] items-center gap-2 border border-[#7b7b7b] bg-[#616161] pl-[6px]"><SearchIc /><input aria-label="Search layers" className="w-full bg-transparent outline-none" /></label>
            <div className="ml-[17px] flex items-center">
              <Btn label="Mini-flowchart"><Ic w={17} h={13} vb="0 0 17 13"><path d="M0 1h6v3H0zM9 0h5v3H9zM9 6h5v3H9z" /><path d="M6 2.500h3M7.500 2.500v5H9" {...line} /><path d="M10 10h6l-3 3z" /></Ic></Btn>
              <Btn label="Draft 3D" className="ml-[16px]"><Ic w={18} h={17} vb="0 0 18 17"><path d="m11 6 5.500 2.500v5L11 16l-5.500-2.500v-5zM5.500 8.500 11 11l5.500-2.500M11 11v5" {...line} /><path d="M4 0v8M0 4h8M1.200 1.200l5.600 5.600M6.800 1.200 1.200 6.800" {...line} strokeWidth="1" /></Ic></Btn>
              <Btn label="Hide shy layers" className="ml-[16px]"><Ic w={16} h={14} vb="0 0 16 14"><path d="M4.500 6.500V5c0-5.500 7-5.500 7 0v1.500zM0 7h16v1H0zM0 9h16v5H0z" /><path d="M8 4v6" stroke="#555" /></Ic></Btn>
              <Btn label="Frame blending" className="ml-[10px]"><Film s={15} /></Btn>
              <Btn label="Motion blur" className="ml-[11px]"><Blur s={15} /></Btn>
              <Btn label="Graph editor" className="ml-[18px]"><Ic w={17} h={16} vb="0 0 17 16"><path d="M1 3h15v12H1zM4 0v5M8.500 0v3M13 0v5M4 6c5 0 4 7 10 7" {...line} /></Ic></Btn>
            </div>
          </div>
          <LayerTable />
        </div>
        <div className="flex min-w-0 flex-1">
          <div className="relative flex min-w-0 flex-1 flex-col pt-[6px]">
            <div className="flex h-[9px] border-y border-[#2a2a2a] bg-[#aaa]"><span className="w-[6px] rounded-l-full bg-[#6cc8ee]" /><span className="ml-auto w-[7px] rounded-r-full bg-[#6cc8ee]" /></div>
            <div className="flex h-[19px] pl-[7px] pr-[7px] text-[11px] leading-none">
              {Array.from({ length: 10 }, (_, i) => (
                <div key={i} className="relative flex-1">
                  <span className="absolute left-0 top-[2px] -translate-x-1/2">{i === 0 ? ":00s" : `0${i}s`}</span>
                  <span className="absolute bottom-0 left-0 h-1 w-px bg-[#e6e6e6]" />
                  {i === 9 && <><span className="absolute right-0 top-[2px] translate-x-1/2">10s</span><span className="absolute bottom-0 right-0 h-1 w-px bg-[#e6e6e6]" /></>}
                </div>
              ))}
            </div>
            <div className="flex h-[17px] border-y border-[#2a2a2a] bg-[#ababab]"><span className="w-[6px] rounded-l-[3px] bg-[#6cc8ee]" /><span className="ml-auto w-[6px] rounded-r-[3px] bg-[#6cc8ee]" /></div>
            <div className="h-1 border-b border-[#2a2a2a] bg-[#3b9b47] px-[7px]" />
            <div className="h-[17px] bg-[#a8a8a8] pr-[7px] pl-[7px] pb-px"><div className="h-full bg-gradient-to-b from-[#66fa72] to-[#50ea5e]" /></div>
            <div className="h-[17px] bg-[#8e8e8e] pl-[7px] pr-[7px]"><div className="h-full border-y border-[#8583c8] bg-[#5e64ff]" /></div>
            <div className="flex-1 pl-[7px] pr-[7px]"><div className="h-full bg-[#7a7a7a]" /></div>
            <div className="pointer-events-none absolute bottom-0 left-[7px] top-[18px] w-px bg-[#7fd4f5]" />
            <Ic w={11} h={14} vb="0 0 11 14" className="absolute left-[2px] top-[18px] text-[#6cc8ee]"><path d="M0 0h11v7l-5.500 7L0 7z" /></Ic>
          </div>
          <div className="flex w-[18px] flex-col items-center pt-[36px]">
            <Ic w={12} h={14} vb="0 0 12 14"><path d="M0 0h12v9l-6 5-6-5z" /></Ic>
            <Ic w={14} h={12} vb="0 0 14 12" className="mt-[7px]"><path d="M7 0h7v7H9L7 9z" /><path d="M6.500.7 1 5.500h2.500M4 7.500a2.500 2.500 0 1 1 0 .2" {...line} /></Ic>
          </div>
        </div>
      </div>
      <div className="flex h-[17px] items-center border-t border-[#4a4a4a] text-[#84d0f5]">
        <Btn label="Layer switches" className="ml-[5px] w-4"><Ic w={12} h={12} vb="0 0 12 12"><path d="M1 1h6v5H1zM3 3h6v5H3zM5 5h6v6H5zM7 8h2" {...line} strokeWidth="1" /></Ic></Btn>
        <Btn label="Transfer controls" className="ml-[2px] w-4"><Ic w={12} h={12} vb="0 0 12 12"><circle cx="4.500" cy="4.500" r="3.500" {...line} /><path d="M6 6h5v5H6z" {...line} /></Ic></Btn>
        <Btn label="In/Out panes" className="ml-[2px] w-4 text-[#d9d9d9]"><Ic w={11} h={12} vb="0 0 11 12"><path d="M2 0h3v12H2V9.500L0 8V4l2-1.500zM6 0h3v2.500L11 4v4L9 9.500V12H6z" /></Ic></Btn>
        <div className="ml-[742px] flex items-center text-[#e6e6e6]">
          <Ic w={9} h={5} vb="0 0 9 5"><path d="M0 5 3 1l1.500 1.500L6 0l3 5z" /></Ic>
          <input type="range" aria-label="Timeline zoom" min="0" max="100" defaultValue="0" className="mx-[11px] h-3 w-[50px] appearance-none bg-[linear-gradient(#8c8c8c,#8c8c8c)] bg-[length:36px_2px] bg-[position:right_center] bg-no-repeat [&::-webkit-slider-thumb]:h-[10px] [&::-webkit-slider-thumb]:w-[10px] [&::-webkit-slider-thumb]:appearance-none [&::-webkit-slider-thumb]:rounded-full [&::-webkit-slider-thumb]:border-2 [&::-webkit-slider-thumb]:border-[#e6e6e6] [&::-webkit-slider-thumb]:bg-[#666]" />
          <Ic w={15} h={7} vb="0 0 15 7"><path d="M0 7 4 2l2 2L9 0l6 7z" /></Ic>
        </div>
      </div>
    </section>
  );
}

const LATIN_MARKS = [
  [157, 152], [1076, 211], [1420, 68], [738, 354], [394, 498], [1303, 545], [1643, 402], [53, 642], [963, 690],
  [622, 832], [282, 976], [1542, 895], [1202, 1038], [1883, 752], [498, 9], [1986, 258], [-97, 498],
];
const CJK_MARKS = [
  [725, 135], [296, 317], [1383, 295], [952, 475], [525, 659], [1625, 655], [97, 836], [767, 1010], [1195, 830], [1636, 1075], [1806, 113], [1158, -49],
];

function Watermarks() {
  return (
    <div aria-hidden="true" className="pointer-events-none absolute inset-0 select-none overflow-hidden whitespace-nowrap font-bold leading-none">
      {LATIN_MARKS.map(([x, y]) => (
        <span key={`${x},${y}`} style={{ left: x, top: y }} className="absolute -translate-x-1/2 -translate-y-1/2 -rotate-[28deg] font-['DejaVu_Serif',serif] text-[63px] text-white/10 [-webkit-text-stroke:2px_rgba(0,0,0,0.1)]">RRCG</span>
      ))}
      {CJK_MARKS.map(([x, y]) => (
        <span key={`${x},${y}`} style={{ left: x, top: y }} className="absolute -translate-x-1/2 -translate-y-1/2 -rotate-[26deg] text-[71px] font-black text-white/10 [-webkit-text-stroke:2px_rgba(0,0,0,0.1)]">人人素材</span>
      ))}
      <span className="absolute left-[877px] top-[10px] font-['Open_Sans',sans-serif] text-[28px] text-[#999]/55">www.rrcg.cn</span>
      <span className="absolute left-[869px] top-[1026px] flex items-center gap-[14px]">
        <svg width="42" height="42" viewBox="0 0 42 42">
          <defs><linearGradient id="ring" x1="0" y1="0" x2="1" y2="1"><stop offset="0" stopColor="#b5b5b5" /><stop offset="1" stopColor="#6d6d6d" /></linearGradient></defs>
          <path d="M34 8A18.500 20 0 1 0 32 36 15.500 16.500 0 1 1 34 8z" fill="url(#ring)" /><circle cx="22" cy="21" r="16" fill="none" stroke="url(#ring)" strokeWidth="1.200" />
          <path d="m11 28 5-13 5 10 5-12 6 14 7 1" fill="none" stroke="#2d6ea8" strokeWidth="4" strokeLinejoin="round" /><path d="m12 25 4-9 5 9 5-10" fill="none" stroke="#69aee0" strokeWidth="1.500" />
        </svg>
        <span className="bg-gradient-to-b from-[#bdbdbd] to-[#8a8a8a] bg-clip-text text-[32px] text-transparent">人人素材</span>
      </span>
    </div>
  );
}

export default function App() {
  return (
    <div className={`relative flex min-h-screen flex-col overflow-hidden bg-white pb-[2px] ${FONT}`}>
      <TitleBar />
      <MenuBar />
      <main className="flex flex-1 flex-col bg-[#666]">
        <Toolbar />
        <div className="flex flex-1">
          <div className="flex min-w-0 flex-1 flex-col">
            <div className="flex pb-[3px]"><ProjectPanel /><CompositionPanel /><EffectPanel /></div>
            <Timeline />
          </div>
          <CharacterPanel />
        </div>
      </main>
      <Watermarks />
    </div>
  );
}
